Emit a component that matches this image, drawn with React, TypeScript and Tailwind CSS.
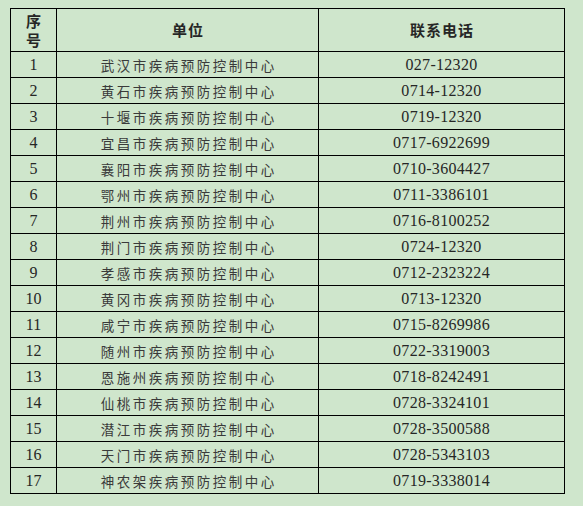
import React from "react";

const rows: [string, string][] = [
  ["武汉市疾病预防控制中心", "027-12320"],
  ["黄石市疾病预防控制中心", "0714-12320"],
  ["十堰市疾病预防控制中心", "0719-12320"],
  ["宜昌市疾病预防控制中心", "0717-6922699"],
  ["襄阳市疾病预防控制中心", "0710-3604427"],
  ["鄂州市疾病预防控制中心", "0711-3386101"],
  ["荆州市疾病预防控制中心", "0716-8100252"],
  ["荆门市疾病预防控制中心", "0724-12320"],
  ["孝感市疾病预防控制中心", "0712-2323224"],
  ["黄冈市疾病预防控制中心", "0713-12320"],
  ["咸宁市疾病预防控制中心", "0715-8269986"],
  ["随州市疾病预防控制中心", "0722-3319003"],
  ["恩施州疾病预防控制中心", "0718-8242491"],
  ["仙桃市疾病预防控制中心", "0728-3324101"],
  ["潜江市疾病预防控制中心", "0728-3500588"],
  ["天门市疾病预防控制中心", "0728-5343103"],
  ["神农架疾病预防控制中心", "0719-3338014"],
];

const cjk = "font-['Noto_Sans_CJK_SC',sans-serif]";
const serif = "font-['Liberation_Serif','Noto_Sans_CJK_SC',serif]";

export default function App() {
  return (
    <div className="w-[583px] h-[506px] bg-[#cfe6cc] pl-[10px] pt-[8px] overflow-hidden">
      <table className="border-collapse table-fixed w-[554px] text-[#262626]">
        <colgroup>
          <col className="w-[46px]" />
          <col className="w-[262px]" />
          <col className="w-[246px]" />
        </colgroup>
        <thead>
          <tr className="h-[43px]">
            <th className={`border border-black p-0 font-bold text-[15px] leading-[19px] ${cjk}`}>
              序<br />号
            </th>
            <th className={`border border-black p-0 pl-[1px] font-bold text-[15px] tracking-[1px] ${cjk}`}>单位</th>
            <th className={`border border-black p-0 pl-[1px] font-bold text-[15px] tracking-[1px] ${cjk}`}>联系电话</th>
          </tr>
        </thead>
        <tbody>
          {rows.map(([name, tel], i) => (
            <tr key={i} className="h-[26px]">
              <td className={`border border-black p-0 text-center text-[16px] leading-[24px] ${serif}`}>{i + 1}</td>
              <td className={`border border-black p-0 pl-[2.5px] text-center text-[13.5px] tracking-[2.5px] leading-[24px] text-[#3a3a3a] ${cjk}`}>
                {name}
              </td>
              <td className={`border border-black p-0 text-center text-[16px] tracking-[0.3px] leading-[24px] ${serif}`}>{tel}</td>
            </tr>
          ))}
        </tbody>
      </table>
    </div>
  );
}
